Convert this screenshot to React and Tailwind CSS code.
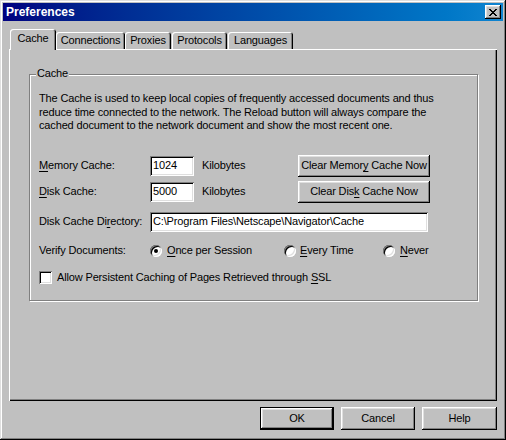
import React from "react";

const bevel = "shadow-[inset_-1px_-1px_#000,inset_1px_1px_#fff,inset_-2px_-2px_#808080,inset_2px_2px_#dfdfdf]";
const sunken = "shadow-[inset_1px_1px_#808080,inset_-1px_-1px_#fff,inset_2px_2px_#000,inset_-2px_-2px_#dfdfdf]";

function Tab({ label, w, selected, extra = "" }) {
  if (selected) {
    return (
      <div
        className={`relative z-10 h-[21px] -mb-[1px] ${w} ${extra} bg-[#c0c0c0] rounded-t-[3px] shadow-[inset_1px_1px_#fff,inset_-1px_0_#000,inset_-2px_0_#808080] flex items-center justify-center pb-[2px]`}
      >
        {label}
      </div>
    );
  }
  return (
    <div
      className={`h-[17px] ${w} ${extra} bg-[#c0c0c0] rounded-t-[3px] shadow-[inset_1px_1px_#fff,inset_-1px_0_#000,inset_-2px_0_#808080] flex items-center justify-center`}
    >
      {label}
    </div>
  );
}

function Field({ w, children }) {
  return (
    <div className={`${w} h-[20px] bg-white ${sunken} flex items-center pl-[3px] whitespace-nowrap overflow-hidden`}>
      {children}
    </div>
  );
}

function Button({ w, h, children, def }) {
  if (def) {
    return (
      <div className={`${w} ${h} border border-black flex`}>
        <div className={`flex-1 ${bevel} flex items-center justify-center`}>{children}</div>
      </div>
    );
  }
  return <div className={`${w} ${h} ${bevel} flex items-center justify-center`}>{children}</div>;
}

function Radio({ checked }) {
  return (
    <div className={`w-[12px] h-[12px] rounded-full bg-white ${sunken} flex items-center justify-center shrink-0`}>
      {checked && <div className="w-[4px] h-[4px] rounded-full bg-black" />}
    </div>
  );
}

const U = ({ children }) => <span className="underline underline-offset-[2px] decoration-1">{children}</span>;

export default function App() {
  return (
    <div
      className={`w-[506px] h-[440px] bg-[#c0c0c0] p-[3px] flex flex-col font-['Liberation_Sans',Arial,sans-serif] text-[11px] leading-[13px] text-black shadow-[inset_-1px_-1px_#000,inset_1px_1px_#dfdfdf,inset_-2px_-2px_#808080,inset_2px_2px_#fff] tracking-[-0.15px]`}
    >
      {/* Title bar */}
      <div className="h-[18px] flex items-center justify-between pl-[3px] pr-[2px] bg-gradient-to-r from-[#000080] to-[#1084d0]">
        <span className="text-white font-bold text-[12px] tracking-normal">Preferences</span>
        <div className={`w-[16px] h-[14px] ${bevel} bg-[#c0c0c0] flex items-center justify-center`}>
          <svg width="8" height="7" viewBox="0 0 8 7">
            <path
              fill="#000"
              d="M0 0h2v1h1v1h2V1h1V0h2v1H7v1H6v1H5v1h1v1h1v1h1v1H6V6H5V5H3v1H2v1H0V6h1V5h1V4h1V3H2V2H1V1H0V0z"
            />
          </svg>
        </div>
      </div>

      {/* Body */}
      <div className="flex flex-col pl-[6px] pt-[8px]">
        {/* Tabs */}
        <div className="flex items-end h-[20px] pl-[1px]">
          <Tab label="Cache" w="w-[46px]" selected />
          <Tab label="Connections" w="w-[69px]" />
          <Tab label="Proxies" w="w-[46px]" />
          <Tab label="Protocols" w="w-[55px]" extra="ml-[1px]" />
          <Tab label="Languages" w="w-[65px]" extra="ml-[1px]" />
        </div>

        {/* Panel */}
        <div className="w-[488px] h-[352px] shadow-[inset_1px_1px_#fff,inset_-1px_-1px_#000,inset_-2px_-2px_#808080] pl-[20px] pt-[25px]">
          {/* Group box */}
          <div className="relative w-[449px] h-[227px] border border-[#808080] shadow-[1px_1px_0_#fff,inset_1px_1px_0_#fff] pl-[9px] pt-[17px]">
            <span className="absolute -top-[8px] left-[6px] px-[1px] bg-[#c0c0c0]">Cache</span>

            <p className="whitespace-nowrap leading-[13.5px]">
              The Cache is used to keep local copies of frequently accessed documents and thus
              <br />
              reduce time connected to the network. The Reload button will always compare the
              <br />
              cached document to the network document and show the most recent one.
            </p>

            <div className="w-[391px] flex flex-col mt-[22px]">
              <div className="flex items-center h-[22px]">
                <div className="w-[111px]">
                  <U>M</U>emory Cache:
                </div>
                <Field w="w-[44px]">1024</Field>
                <div className="ml-[8px]">Kilobytes</div>
                <div className="ml-auto">
                  <Button w="w-[132px]" h="h-[22px]">
                    Clear Memor<U>y</U>&nbsp;Cache Now
                  </Button>
                </div>
              </div>

              <div className="flex items-center h-[22px] mt-[4px]">
                <div className="w-[111px]">
                  <U>D</U>isk Cache:
                </div>
                <Field w="w-[44px]">5000</Field>
                <div className="ml-[8px]">Kilobytes</div>
                <div className="ml-auto">
                  <Button w="w-[132px]" h="h-[22px]">
                    Clear Dis<U>k</U>&nbsp;Cache Now
                  </Button>
                </div>
              </div>

              <div className="flex items-center h-[20px] mt-[9px]">
                <div className="w-[111px]">
                  Disk Cache Di<U>r</U>ectory:
                </div>
                <Field w="w-[278px]">C:\Program Files\Netscape\Navigator\Cache</Field>
              </div>

              <div className="flex items-center h-[20px] mt-[9px]">
                <div className="w-[111px]">Verify Documents:</div>
                <div className="w-[134px] flex items-center gap-[5px]">
                  <Radio checked />
                  <span>
                    <U>O</U>nce per Session
                  </span>
                </div>
                <div className="w-[99px] flex items-center gap-[4px]">
                  <Radio />
                  <span>
                    <U>E</U>very Time
                  </span>
                </div>
                <div className="flex items-center gap-[5px]">
                  <Radio />
                  <span>
                    <U>N</U>ever
                  </span>
                </div>
              </div>

              <div className="flex items-center h-[13px] mt-[10px] gap-[5px]">
                <div className={`w-[13px] h-[13px] bg-white ${sunken}`} />
                <span>
                  Allow Persistent Caching of Pages Retrieved through <U>S</U>SL
                </span>
              </div>
            </div>
          </div>
        </div>

        {/* Bottom buttons */}
        <div className="w-[488px] flex justify-end gap-[7px] mt-[6px]">
          <Button w="w-[74px]" h="h-[23px]" def>
            OK
          </Button>
          <Button w="w-[74px]" h="h-[23px]">
            Cancel
          </Button>
          <Button w="w-[75px]" h="h-[23px]">
            Help
          </Button>
        </div>
      </div>
    </div>
  );
}
